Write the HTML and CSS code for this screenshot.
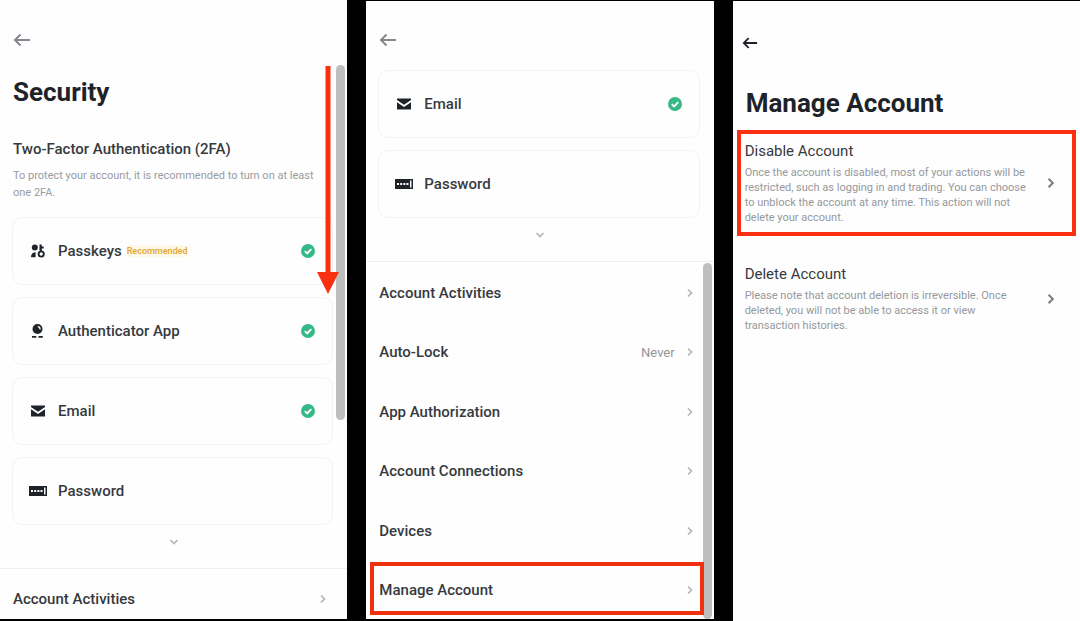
FILE: index.html
```html
<!DOCTYPE html>
<html lang="en">
<head>
  <meta charset="UTF-8">
  <meta name="viewport" content="width=device-width, initial-scale=1.0">
  <title>Manage Account</title>
  <link rel="stylesheet" href="styles.css">
</head>
<body>
  <!-- Shared icons -->
  <svg class="sprite" aria-hidden="true">
    <symbol id="back" viewBox="0 0 18 14"><path d="M17 7H2M7.500 1.500L2 7l5.500 5.500" fill="none" stroke="currentColor" stroke-width="2"/></symbol>
    <symbol id="chevron" viewBox="0 0 6 10"><path d="M1 1.500L4.500 5L1 8.500" fill="none" stroke="currentColor" stroke-width="1.700"/></symbol>
    <symbol id="down" viewBox="0 0 10 6"><path d="M1.500 1L5 4.500L8.500 1" fill="none" stroke="currentColor" stroke-width="1.700"/></symbol>
    <symbol id="check" viewBox="0 0 14 14"><circle cx="7" cy="7" r="7" fill="#37b987"/><path d="M3.800 7.200l2.300 2.200 4.200-4.300" fill="none" stroke="#fff" stroke-width="1.800"/></symbol>
    <symbol id="passkeys" viewBox="0 0 18 14"><circle cx="5.800" cy="3.500" r="3"/><path d="M2 13.200c0-3 1.500-4.900 4.600-4.900v4.900zM10.500.500h2.200v2h2v2h-2V6h-2.200z"/><circle cx="12.200" cy="10" r="2.600" fill="none" stroke="currentColor" stroke-width="1.900"/><path d="M10.800 5h1.900v3h-1.900z"/></symbol>
    <symbol id="authenticator" viewBox="0 0 18 14"><circle cx="8.500" cy="5" r="5"/><path d="M8.800 2.600a2.400 2.400 0 0 1 2.200 2.800" fill="none" stroke="#fff" stroke-width="1.400"/><path d="M3 12h4.300v1.700H3zM9.500 12h4.300v1.700H9.500z"/></symbol>
    <symbol id="email" viewBox="0 0 18 14"><path d="M2 1.500h14v1.600L9 7.800 2 3.100zM2 5.200l7 4.700 7-4.700v7.300H2z"/></symbol>
    <symbol id="password" viewBox="0 0 18 14"><path d="M0 2h18v10H0zM15 3.500v7h1.500v-7z" fill-rule="evenodd"/><path d="M2 6h2v2H2zM5.200 6h2v2h-2zM8.400 6h2v2h-2zM11.500 6h2v2h-2z" fill="#fff"/></symbol>
  </svg>

  <main class="screens">
    <!-- Security, top of the page -->
    <section class="screen security">
      <button class="back" aria-label="Back"><svg><use href="#back"/></svg></button>
      <h1>Security</h1>
      <h2>Two-Factor Authentication (2FA)</h2>
      <p class="hint">To protect your account, it is recommended to turn on at least one 2FA.</p>
      <div class="cards">
        <a class="card" href="#"><svg class="icon"><use href="#passkeys"/></svg>Passkeys <span class="tag">Recommended</span><svg class="check"><use href="#check"/></svg></a>
        <a class="card" href="#"><svg class="icon"><use href="#authenticator"/></svg>Authenticator App<svg class="check"><use href="#check"/></svg></a>
        <a class="card" href="#"><svg class="icon"><use href="#email"/></svg>Email<svg class="check"><use href="#check"/></svg></a>
        <a class="card" href="#"><svg class="icon"><use href="#password"/></svg>Password</a>
      </div>
      <button class="more" aria-label="Show more"><svg><use href="#down"/></svg></button>
      <nav class="rows">
        <a class="row" href="#">Account Activities<svg class="chevron"><use href="#chevron"/></svg></a>
      </nav>
      <div class="scrollbar"></div>
      <svg class="scroll-arrow" viewBox="0 0 22 228"><path d="M8.500 0h5v206H22L11 228 0 206h8.500z" fill="#f9300f"/></svg>
    </section>

    <!-- Security, scrolled down -->
    <section class="screen scrolled">
      <button class="back" aria-label="Back"><svg><use href="#back"/></svg></button>
      <div class="cards">
        <a class="card" href="#"><svg class="icon"><use href="#email"/></svg>Email<svg class="check"><use href="#check"/></svg></a>
        <a class="card" href="#"><svg class="icon"><use href="#password"/></svg>Password</a>
      </div>
      <button class="more" aria-label="Show more"><svg><use href="#down"/></svg></button>
      <nav class="rows">
        <a class="row" href="#">Account Activities<svg class="chevron"><use href="#chevron"/></svg></a>
        <a class="row" href="#">Auto-Lock<span class="value">Never</span><svg class="chevron"><use href="#chevron"/></svg></a>
        <a class="row" href="#">App Authorization<svg class="chevron"><use href="#chevron"/></svg></a>
        <a class="row" href="#">Account Connections<svg class="chevron"><use href="#chevron"/></svg></a>
        <a class="row" href="#">Devices<svg class="chevron"><use href="#chevron"/></svg></a>
        <a class="row marked" href="#">Manage Account<svg class="chevron"><use href="#chevron"/></svg></a>
      </nav>
      <div class="scrollbar"></div>
    </section>

    <!-- Manage account -->
    <section class="screen manage">
      <button class="back" aria-label="Back"><svg><use href="#back"/></svg></button>
      <h1>Manage Account</h1>
      <a class="option selected" href="#">
        <div class="option-text">
          <h3>Disable Account</h3>
          <p>Once the account is disabled, most of your actions will be restricted, such as logging in and trading. You can choose to unblock the account at any time. This action will not delete your account.</p>
        </div>
        <svg class="chevron"><use href="#chevron"/></svg>
      </a>
      <a class="option" href="#">
        <div class="option-text">
          <h3>Delete Account</h3>
          <p>Please note that account deletion is irreversible. Once deleted, you will not be able to access it or view transaction histories.</p>
        </div>
        <svg class="chevron"><use href="#chevron"/></svg>
      </a>
    </section>
  </main>
</body>
</html>
```
FILE: styles.css
```css
* {
  box-sizing: border-box;
}

body {
  margin: 0;
  background-color: #000;
  color: #363a40;
  font-family: Roboto, "Liberation Sans", sans-serif;
}

h1, h2, h3, p {
  margin: 0;
}

a {
  color: inherit;
  text-decoration: none;
}

button {
  padding: 0;
  border: none;
  background: none;
  cursor: pointer;
}

svg {
  display: block;
  flex: none;
  fill: currentColor;
}

.sprite {
  position: absolute;
  width: 0;
  height: 0;
}

.screens {
  display: grid;
  grid-template-columns: repeat(3, 1fr);
  gap: 19px;
  min-height: 100vh;
}

.screen {
  position: relative;
  display: flex;
  flex-direction: column;
  margin-bottom: 2px;
  background-color: #fefefe;
}

.back {
  align-self: flex-start;
  color: #84888f;
}

.back svg {
  width: 18px;
  height: 14px;
}

h1 {
  color: #1e2329;
  font-size: 26px;
  line-height: 32px;
  font-weight: 700;
}

/* Cards */
.cards {
  display: flex;
  flex-direction: column;
  gap: 12px;
  padding: 0 14px 0 12px;
}

.card {
  display: flex;
  align-items: center;
  height: 68px;
  padding: 0 17px 0 16px;
  border: 1px solid #f3f3f4;
  border-radius: 10px;
  font-size: 15px;
  font-weight: 500;
}

.icon {
  width: 18px;
  height: 14px;
  margin-right: 11px;
  color: #1e2329;
}

.tag {
  margin-left: 5px;
  background-color: #fef8e8;
  color: #e2a52c;
  font-size: 9px;
  line-height: 12px;
}

.check {
  width: 14px;
  height: 14px;
  margin-left: auto;
}

.more {
  display: flex;
  align-items: center;
  justify-content: center;
  height: 34px;
  color: #b4b6ba;
}

.more svg {
  width: 10px;
  height: 6px;
}

/* List rows */
.rows {
  display: grid;
  grid-auto-rows: 1fr;
  flex: 1;
  border-top: 1px solid #efeff0;
}

.row {
  position: relative;
  display: flex;
  align-items: center;
  padding: 0 21px 0 13px;
  font-size: 15px;
  font-weight: 500;
}

.chevron {
  width: 6px;
  height: 10px;
  margin-left: auto;
  color: #b4b6ba;
}

.value {
  margin-left: auto;
  color: #92959b;
  font-size: 13px;
  font-weight: 400;
}

.value + .chevron {
  margin-left: 12px;
}

.marked::after {
  content: "";
  position: absolute;
  inset: 2px 10px 4px 4px;
  border: 4px solid #f0300f;
  z-index: 1;
}

.scrollbar {
  position: absolute;
  right: 2px;
  width: 9px;
  border-radius: 5px;
  background-color: #bebebe;
}

/* Security screen */
.security {
  padding-top: 33px;
}

.security .back {
  margin-left: 13px;
}

.security h1 {
  margin: 29px 13px 0;
}

.security h2 {
  margin: 31px 13px 0;
  font-size: 15px;
  line-height: 20px;
  font-weight: 500;
}

.hint {
  margin: 8px 24px 16px 13px;
  color: #999ca1;
  font-size: 11px;
  line-height: 17px;
}

.security .rows {
  margin-top: 9px;
}

.security .row {
  min-height: 50px;
  padding-top: 10px;
}

.security .scrollbar {
  top: 65px;
  height: 355px;
}

.scroll-arrow {
  position: absolute;
  top: 66px;
  right: 8px;
  width: 22px;
  height: 228px;
}

/* Scrolled screen */
.scrolled {
  margin-top: 1px;
  padding-top: 32px;
}

.scrolled .back {
  margin-left: 13px;
}

.scrolled .cards {
  margin-top: 23px;
}

.scrolled .rows {
  margin-top: 9px;
}

.scrolled .row {
  min-height: 59px;
  padding-top: 2px;
}

.scrolled .scrollbar {
  top: 262px;
  bottom: 0;
}

/* Manage screen */
.manage {
  margin-top: 1px;
  margin-bottom: 0;
  padding: 35px 4px 0 4px;
}

.manage .back {
  margin-left: 5px;
  color: #1e2329;
}

.manage .back svg {
  width: 16px;
}

.manage h1 {
  margin: 37px 9px 11px;
}

.option {
  display: flex;
  align-items: center;
  padding: 7px 17px 7px 4px;
  border: 4px solid transparent;
}

.selected {
  margin-bottom: 17px;
  border-color: #f9300f;
}

.option-text {
  max-width: 286px;
}

.option h3 {
  font-size: 15px;
  line-height: 20px;
  font-weight: 400;
}

.option p {
  margin-top: 4px;
  color: #95989d;
  font-size: 11px;
  line-height: 15px;
}

.option .chevron {
  width: 8px;
  height: 12px;
  color: #7b7e84;
}
```
